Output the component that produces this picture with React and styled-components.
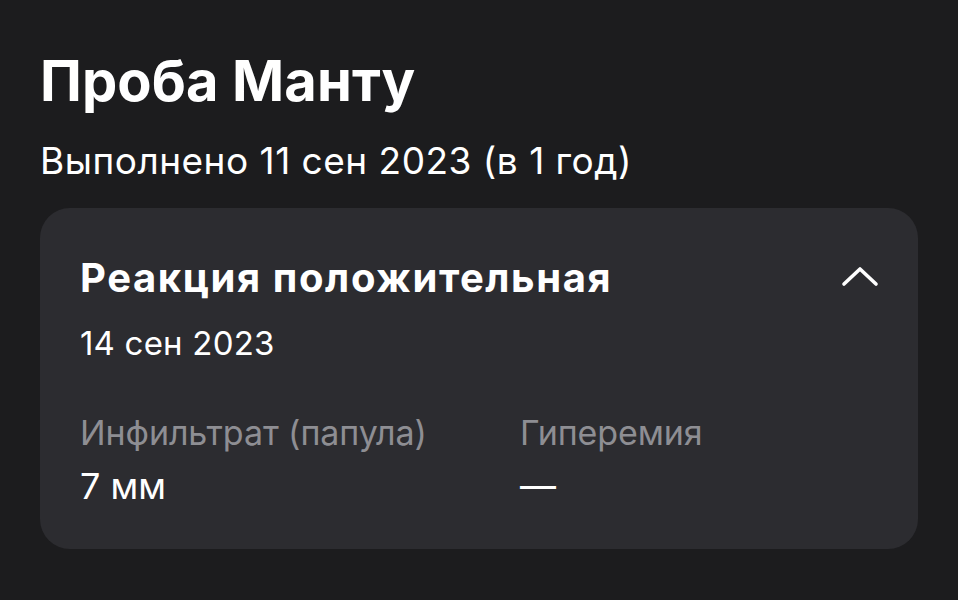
import styled, { createGlobalStyle } from "styled-components";

const Global = createGlobalStyle`
  html, body {
    margin: 0;
    padding: 0;
    background: #1c1c1e;
  }
  body {
    font-family: Inter, "Noto Sans", sans-serif;
    color: #ffffff;
    -webkit-font-smoothing: antialiased;
  }
`;

const Page = styled.div`
  width: 958px;
  height: 600px;
  box-sizing: border-box;
  padding: 47px 40px 0 40px;
  background: #1c1c1e;
`;

const Title = styled.h1`
  margin: 0;
  font-size: 56px;
  font-weight: 700;
  letter-spacing: 0.1px;
  line-height: 68px;
`;

const Subtitle = styled.p`
  margin: 24px 0 0 0;
  font-size: 37px;
  font-weight: 400;
  line-height: 44px;
  letter-spacing: 0.5px;
`;

const Card = styled.section`
  margin-top: 25px;
  width: 878px;
  box-sizing: border-box;
  background: #2c2c30;
  border-radius: 30px;
  padding: 46px 38px 41px 40px;
`;

const CardHead = styled.div`
  display: flex;
  align-items: flex-start;
  justify-content: space-between;
`;

const CardTitle = styled.h2`
  margin: 0;
  font-size: 40px;
  font-weight: 700;
  line-height: 48px;
  letter-spacing: 1.6px;
`;

const Toggle = styled.button`
  border: 0;
  background: none;
  padding: 0;
  margin: 7px 0 0 0;
  width: 40px;
  height: 30px;
  display: flex;
  align-items: center;
  justify-content: center;
  color: #ffffff;
`;

const CardDate = styled.p`
  margin: 21px 0 0 0;
  font-size: 33px;
  line-height: 40px;
  letter-spacing: 0.2px;
`;

const Stats = styled.div`
  margin-top: 50px;
  display: grid;
  grid-template-columns: 440px 1fr;
`;

const Stat = styled.div`
  display: flex;
  flex-direction: column;
  gap: 11px;
`;

const Label = styled.span`
  font-size: 34px;
  line-height: 40px;
  color: #8e8e93;
  letter-spacing: -0.1px;
`;

const Value = styled.span`
  font-size: 36px;
  line-height: 44px;
  letter-spacing: 0px;
`;

const ChevronUp = () => (
  <svg width="38" height="24" viewBox="0 0 38 24" fill="none">
    <path
      d="M3 20 L19 5 L35 20"
      stroke="currentColor"
      strokeWidth="3.6"
      strokeLinecap="round"
      strokeLinejoin="round"
    />
  </svg>
);

export default function App() {
  return (
    <>
      <Global />
      <Page>
        <Title>Проба Манту</Title>
        <Subtitle>Выполнено 11 сен 2023 (в 1 год)</Subtitle>
        <Card>
          <CardHead>
            <CardTitle>Реакция положительная</CardTitle>
            <Toggle aria-label="Свернуть">
              <ChevronUp />
            </Toggle>
          </CardHead>
          <CardDate>14 сен 2023</CardDate>
          <Stats>
            <Stat>
              <Label>Инфильтрат (папула)</Label>
              <Value>7 мм</Value>
            </Stat>
            <Stat>
              <Label>Гиперемия</Label>
              <Value>—</Value>
            </Stat>
          </Stats>
        </Card>
      </Page>
    </>
  );
}
